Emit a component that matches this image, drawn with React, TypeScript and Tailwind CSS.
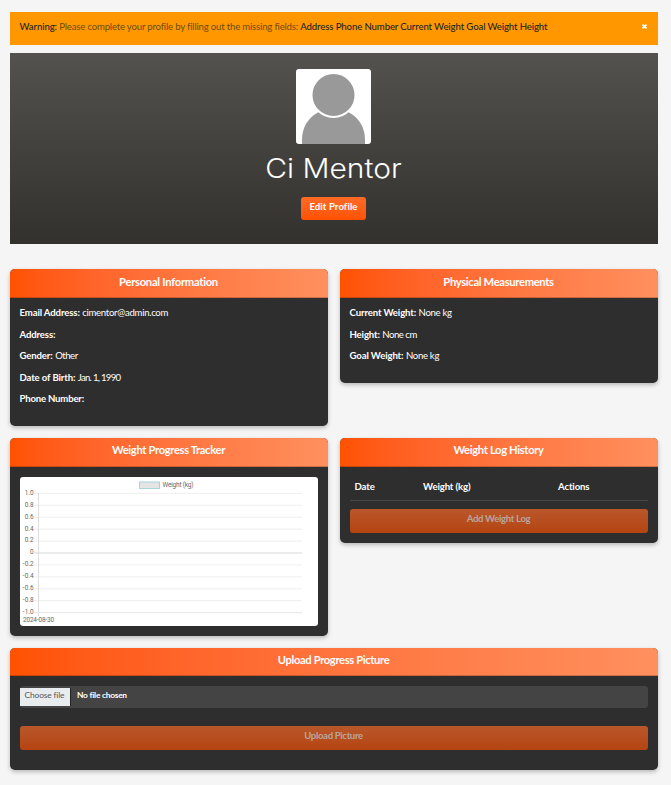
import type { ReactNode } from "react";

function Card({ title, titleClass, headClass = "h-[29px]", className, children }: { title: string; titleClass: string; headClass?: string; className: string; children: ReactNode }) {
  return (
    <section className={`overflow-hidden rounded-[5px] bg-[#2e2e2e] shadow-[0_2px_4px_rgba(0,0,0,0.25)] ${className}`}>
      <h2 className={`border-b border-black/20 bg-linear-to-r from-[#ff5200] to-[#ff905e] bg-origin-border pr-[1px] text-center text-[11.2px] font-bold ${headClass} ${titleClass}`}>
        {title}
      </h2>
      {children}
    </section>
  );
}

function Field({ label, value, labelClass = "tracking-[-0.13px]", valueClass = "tracking-[-0.3px]" }: { label: string; value?: string; labelClass?: string; valueClass?: string }) {
  return (
    <p className="h-[21.5px] leading-[14px]">
      <strong className={`font-bold ${labelClass}`}>{label}:</strong> <span className={valueClass}>{value}</span>
    </p>
  );
}

function WeightChart() {
  const ticks = ["1.0", "0.8", "0.6", "0.4", "0.2", "0", "-0.2", "-0.4", "-0.6", "-0.8", "-1.0"];
  return (
    <svg viewBox="0 0 298 149" className="block h-[149px] w-[298px] rounded-[3px] bg-white font-['Roboto',sans-serif] text-[6.4px]">
      <rect x="119.5" y="5" width="20" height="6.5" fill="#e5e5e5" stroke="#a5d6d8" />
      <text x="142.5" y="9.7" fill="#666" textLength="31">Weight (kg)</text>
      {ticks.map((tick, i) => (
        <g key={tick}>
          <line x1="14" x2="282" y1={16.4 + i * 11.92} y2={16.4 + i * 11.92} stroke={tick === "0" ? "#d4d4d4" : i === 10 ? "#e2e2e2" : "#ececec"} strokeWidth={0.9} />
          <text x="13.5" y={17.9 + i * 11.88} textAnchor="end" fill="#666">{tick}</text>
        </g>
      ))}
      <line x1="18.5" x2="18.5" y1="16" y2="139" stroke="#dedede" />
      <text x="3" y="144.6" fill="#666" textLength="31">2024-08-30</text>
    </svg>
  );
}

export default function App() {
  return (
    <main className="h-[785px] w-[671px] bg-[#f5f5f5] pt-3 pl-[10px] font-['Lato',sans-serif] text-[9.6px] text-white">
      <div className="flex h-[33px] w-[648px] justify-between bg-[#ff9800] pt-[8px] pr-[10px] pl-[9.5px] leading-[14px] tracking-[-0.19px] text-[#6e4c12]">
        <p>
          <span className="font-medium tracking-[-0.1px] text-[#24242a]">Warning:</span> Please complete your profile by filling out the missing fields:{" "}
          <span className="font-medium tracking-[-0.12px] text-[#24242a]">Address Phone Number Current Weight Goal Weight Height</span>
        </p>
        <svg viewBox="0 0 5 5" className="mt-[4px] mr-[1px] size-[5px]" stroke="white" strokeWidth="1.7">
          <path d="M.5 .5l4 4M4.5 .5l-4 4" />
        </svg>
      </div>

      <header className="mt-2 flex h-[191px] w-[648px] flex-col items-center bg-linear-to-b from-[#53524f] to-[#33312d] pt-4 pr-[1px]">
        <svg viewBox="0 0 75 75" className="size-[75px] rounded-[3px] bg-white" fill="#999">
          <path d="M6 75V71C6 53 19 40 37.500 40S69 53 69 71V75Z" />
          <circle cx="37.500" cy="26" r="22" stroke="white" strokeWidth="2" />
        </svg>
        <h1 className="mt-[7px] h-9 scale-x-[1.11] font-['Inter',sans-serif] text-[27px] leading-9 font-light">Ci Mentor</h1>
        <button className="mt-[10px] h-[23px] w-[65px] rounded-[3px] bg-linear-to-b from-[#ff6a26] to-[#ff5200] pb-[3px] text-[9.6px] font-bold tracking-[0.08px]">Edit Profile</button>
      </header>

      <div className="mt-[25px] grid w-[648px] grid-cols-2 items-start gap-3">
        <Card title="Personal Information" titleClass="leading-[26px] tracking-[-0.27px]" className="h-[157px]">
          <div className="pt-[8px] pr-[10px] pl-[9.5px]">
            <Field label="Email Address" value="cimentor@admin.com" />
            <Field label="Address" />
            <Field label="Gender" value="Other" valueClass="tracking-[-0.5px]" />
            <Field label="Date of Birth" value="Jan. 1, 1990" valueClass="tracking-[-0.72px]" />
            <Field label="Phone Number" labelClass="tracking-[-0.2px]" />
          </div>
        </Card>
        <Card title="Physical Measurements" titleClass="leading-[26px] tracking-[-0.32px]" className="h-[114px]">
          <div className="pt-[8px] pr-[10px] pl-[9.5px]">
            <Field label="Current Weight" value="None kg" />
            <Field label="Height" value="None cm" valueClass="tracking-[-0.5px]" />
            <Field label="Goal Weight" value="None kg" />
          </div>
        </Card>
        <Card title="Weight Progress Tracker" titleClass="leading-[24px] tracking-[-0.34px]" className="h-[198px]">
          <div className="p-[10px]"><WeightChart /></div>
        </Card>
        <Card title="Weight Log History" titleClass="leading-[24px] tracking-[-0.34px]" className="h-[105px]">
          <div className="px-[10px]">
            <div className="grid h-[34px] grid-cols-[68.5px_135px_1fr] border-b border-[#484848] pt-[13px] pl-[4.5px] leading-[14px] font-bold tracking-[-0.12px]">
              <span>Date</span><span>Weight (kg)</span><span>Actions</span>
            </div>
            <button className="mt-2 block h-6 w-full rounded-[3px] bg-linear-to-b from-[#b9572a] to-[#b54410] pr-[1px] pb-[3px] font-bold tracking-[-0.35px] text-[#b7a59d]">Add Weight Log</button>
          </div>
        </Card>
      </div>

      <Card title="Upload Progress Picture" titleClass="leading-[24px] tracking-[-0.35px]" headClass="h-[28px]" className="mt-3 h-[122px] w-[648px]">
        <div className="px-[10px] pt-[10px]">
          <div className="flex h-[22px] items-center rounded-[3px] bg-[#444] text-[8.4px]">
            <span className="h-[18px] w-[51px] border-r border-[#222] bg-[#e9ecef] pl-[4.5px] leading-[15px] tracking-[-0.13px] text-[#51565b]">Choose file</span>
            <span className="ml-[6px] h-[18px] leading-[15px] font-bold tracking-[-0.25px]">No file chosen</span>
          </div>
          <button className="mt-[18px] block h-6 w-full rounded-[3px] bg-linear-to-b from-[#b9572a] to-[#b54410] pr-[1px] pb-[3px] font-bold tracking-[-0.35px] text-[#b7a59d]">Upload Picture</button>
        </div>
      </Card>
    </main>
  );
}
